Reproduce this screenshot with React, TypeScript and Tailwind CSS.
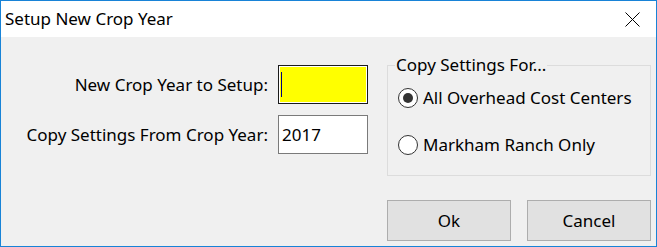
import React from "react";

function Radio({ checked, label }: { checked?: boolean; label: string }) {
  return (
    <div className="flex h-[24px] items-center">
      <span className="flex h-[20px] w-[20px] items-center justify-center rounded-full border-[1.5px] border-[#333333] bg-white">
        {checked && <span className="h-[10px] w-[10px] rounded-full bg-[#333333]" />}
      </span>
      <span className="ml-[5px] whitespace-nowrap">{label}</span>
    </div>
  );
}

export default function App() {
  return (
    <div
      className="flex h-[247px] w-[657px] flex-col border border-[#1883d7] bg-[#f0f0f0] text-[17px] text-black"
      style={{ fontFamily: '"Noto Sans", "Liberation Sans", sans-serif' }}
    >
      <div className="flex h-[36px] items-center justify-between bg-white pl-[4px] pr-[16px]">
        <span className="whitespace-nowrap">Setup New Crop Year</span>
        <svg width="15" height="15" viewBox="0 0 15 15" className="block">
          <path d="M0.5 0.5 L14.5 14.5 M14.5 0.5 L0.5 14.5" stroke="#000" strokeWidth="1" fill="none" />
        </svg>
      </div>
      <div className="flex pr-[5px] pt-[28px]">
        <div className="flex w-[367px] flex-col items-end gap-[11px]">
          <div className="flex items-center">
            <span className="mr-[10px] whitespace-nowrap">New Crop Year to Setup:</span>
            <div className="h-[39px] w-[90px] border border-[#1a1a1a]">
              <div className="flex h-full w-full items-center border border-white bg-[#ffff00] pl-[1px]">
                <span className="h-[25px] w-[1px] bg-[#000080]" />
              </div>
            </div>
          </div>
          <div className="flex items-center">
            <span className="mr-[10px] whitespace-nowrap">Copy Settings From Crop Year:</span>
            <div className="flex h-[39px] w-[90px] items-center border border-[#7a7a7a] bg-white pl-[3px]">
              2017
            </div>
          </div>
        </div>
        <div className="ml-[19px] flex flex-1 flex-col">
          <div className="relative h-[111px] border border-[#dcdcdc] pl-[10px] pt-[20px]">
            <span className="absolute left-[7px] top-[-14px] bg-[#f0f0f0] px-[1px] leading-[26px] whitespace-nowrap">
              Copy Settings For...
            </span>
            <div className="flex flex-col gap-[23px]">
              <Radio checked label="All Overhead Cost Centers" />
              <Radio label="Markham Ranch Only" />
            </div>
          </div>
          <div className="mt-[24px] flex justify-end gap-[16px]">
            <button className="flex h-[41px] w-[124px] items-center justify-center border border-[#adadad] bg-[#e1e1e1]">
              Ok
            </button>
            <button className="flex h-[41px] w-[124px] items-center justify-center border border-[#adadad] bg-[#e1e1e1]">
              Cancel
            </button>
          </div>
        </div>
      </div>
    </div>
  );
}
